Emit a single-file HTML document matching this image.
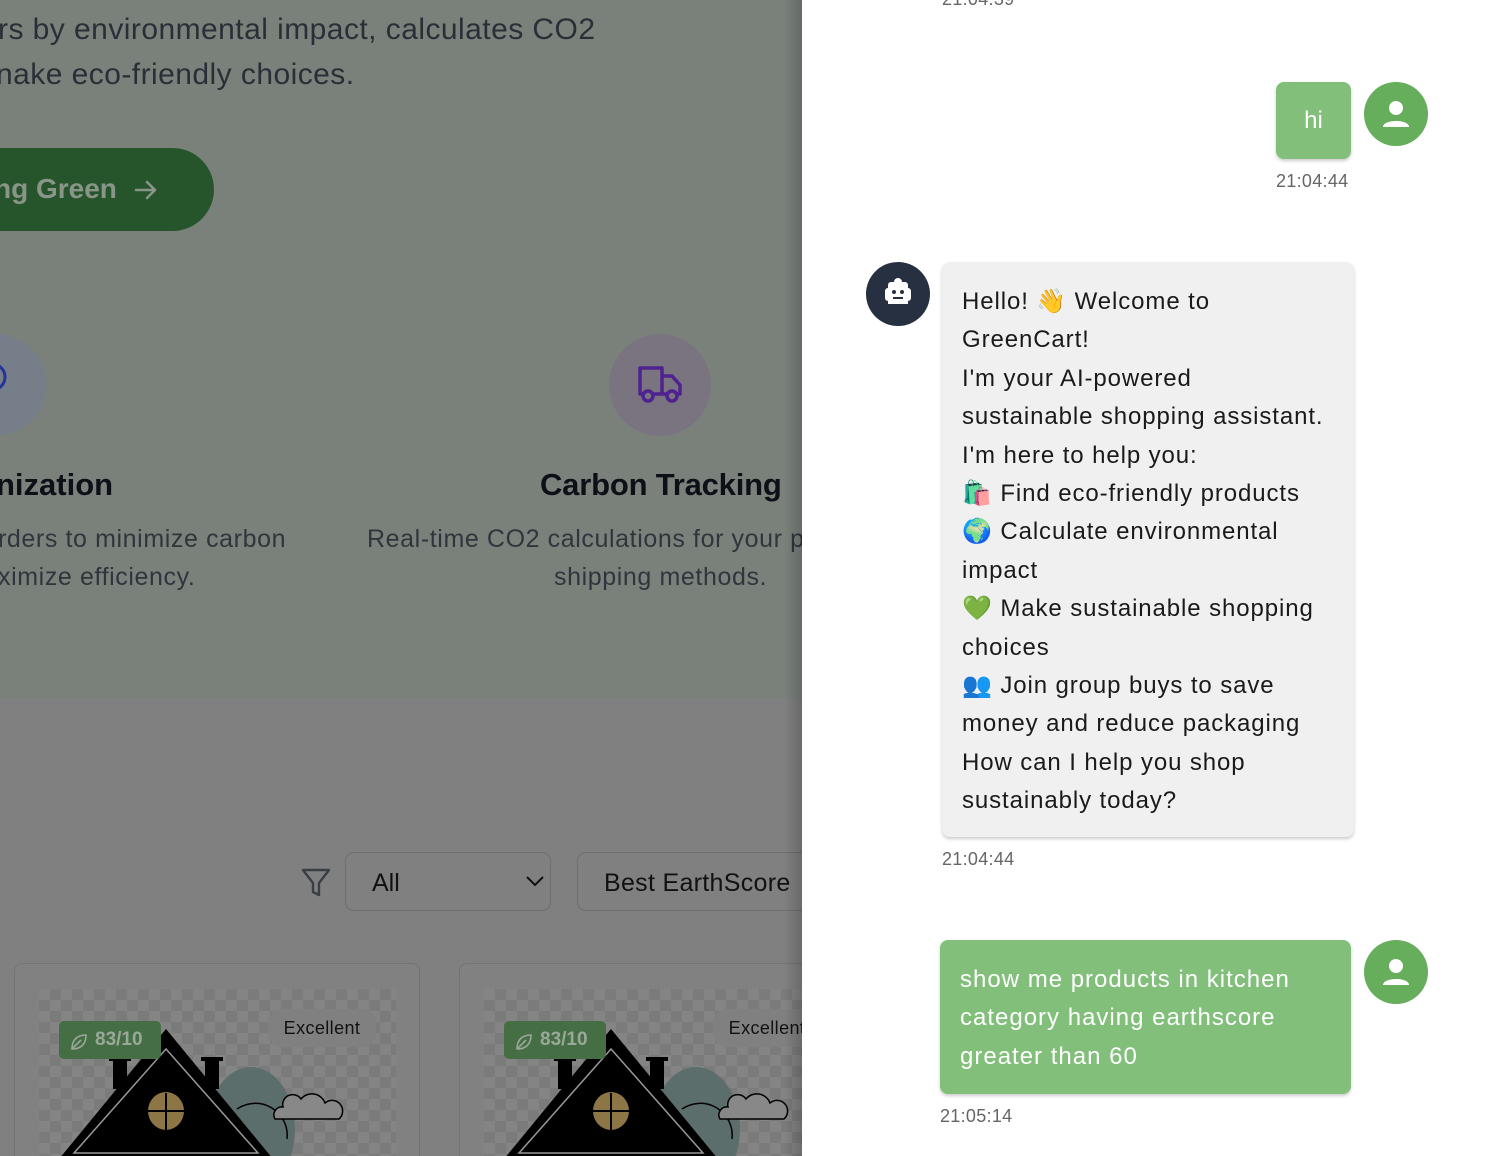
<!DOCTYPE html>
<html><head><meta charset="utf-8">
<style>
*{box-sizing:border-box;margin:0;padding:0}
body{width:1486px;height:1156px;overflow:hidden;position:relative;font-family:"Liberation Sans","Noto Sans CJK SC",sans-serif;background:#fff}
.left{position:absolute;left:0;top:0;width:802px;height:1156px;background:#808080;overflow:hidden}
.hero{position:absolute;left:0;top:0;width:802px;height:698px;background:#7a817b}
.t{position:absolute;white-space:nowrap}
.shade{position:absolute;right:0;top:0;width:18px;height:1156px;background:linear-gradient(to right,rgba(0,0,0,0),rgba(0,0,0,.18))}
.card{position:absolute;top:963px;width:406px;height:220px;border:1px solid #737373;border-radius:8px;background:#818181}
.img{position:absolute;left:24px;top:25px;width:357px;height:200px;background-color:#848484;background-image:linear-gradient(45deg,#7b7b7b 25%,transparent 25%,transparent 75%,#7b7b7b 75%),linear-gradient(45deg,#7b7b7b 25%,transparent 25%,transparent 75%,#7b7b7b 75%);background-size:22px 22px;background-position:0 0,11px 11px}
.badge{position:absolute;left:20px;top:32px;width:102px;height:38px;background:#466e44;border-radius:5px;color:#9aa89a;font-size:19px;font-weight:bold;line-height:38px;padding-left:36px}
.exc{position:absolute;left:229px;top:20px;width:108px;height:38px;background:#808080;border-radius:14px;color:#111;font-size:18px;line-height:38px;text-align:center;letter-spacing:.4px}
.panel{position:absolute;left:802px;top:0;width:684px;height:1156px;background:#fff}
.av{position:absolute;width:64px;height:64px;border-radius:50%}
.ts{position:absolute;font-size:18px;color:#666;white-space:nowrap;letter-spacing:.3px}
.bub{position:absolute;border-radius:8px;font-size:24px;line-height:38.4px;box-shadow:0 2px 3px rgba(0,0,0,.2);white-space:nowrap}
</style></head><body>
<div class="left">
 <div class="hero"></div>
 <div class="t" style="left:-2px;top:13px;font-size:30px;color:#2a2f37;letter-spacing:.45px">rs by environmental impact, calculates CO2</div>
 <div class="t" style="left:-4px;top:58px;font-size:30px;color:#2a2f37;letter-spacing:.45px">nake eco-friendly choices.</div>
 <div style="position:absolute;left:-60px;top:148px;width:274px;height:83px;border-radius:42px;background:#27552b"></div>
 <div class="t" style="left:-6px;top:173px;font-size:28px;font-weight:bold;color:#8a958a">ng Green</div>
 <svg style="position:absolute;left:133px;top:178px" width="26" height="24" viewBox="0 0 26 24"><path d="M3 12h19M14 4l8 8-8 8" stroke="#8a958a" stroke-width="2.5" fill="none" stroke-linecap="round" stroke-linejoin="round"/></svg>
 <div style="position:absolute;left:-56px;top:334px;width:102px;height:102px;border-radius:50%;background:#767e8a"></div>
 <svg style="position:absolute;left:-10px;top:360px" width="20" height="50" viewBox="0 0 20 50"><path d="M2 4 A10 10 0 1 1 2 30 M6 28 L8 42 L2 38" stroke="#24349a" stroke-width="3" fill="none"/></svg>
 <div style="position:absolute;left:609px;top:334px;width:102px;height:102px;border-radius:50%;background:#79747f"></div>
 <svg style="position:absolute;left:636px;top:364px" width="50" height="42" viewBox="0 0 50 42"><path d="M4 4h22v26H4zM26 12h10l8 9v9H26" stroke="#4f2191" stroke-width="3.5" fill="none" stroke-linejoin="round"/><circle cx="12" cy="32" r="5" fill="#79747f" stroke="#4f2191" stroke-width="3.5"/><circle cx="36" cy="32" r="5" fill="#79747f" stroke="#4f2191" stroke-width="3.5"/></svg>
 <div class="t" style="left:-4px;top:467px;font-size:31px;font-weight:bold;color:#0d1017">nization</div>
 <div class="t" style="left:540px;top:467px;font-size:31px;font-weight:bold;color:#0d1017;letter-spacing:-.2px">Carbon Tracking</div>
 <div class="t" style="left:-2px;top:525px;font-size:25px;color:#30353d;letter-spacing:.6px">rders to minimize carbon</div>
 <div class="t" style="left:-2px;top:563px;font-size:25px;color:#30353d;letter-spacing:.6px">ximize efficiency.</div>
 <div class="t" style="left:367px;top:525px;font-size:25px;color:#30353d;letter-spacing:.6px">Real-time CO2 calculations for your pu</div>
 <div class="t" style="left:554px;top:563px;font-size:25px;color:#30353d;letter-spacing:.6px">shipping methods.</div>
 <svg style="position:absolute;left:300px;top:867px" width="32" height="32" viewBox="0 0 32 32"><path d="M3 3h26L19 16v12l-6-3V16z" stroke="#3a3f47" stroke-width="2.4" fill="none" stroke-linejoin="round"/></svg>
 <div style="position:absolute;left:345px;top:852px;width:206px;height:59px;border:1px solid #6e6e6e;border-radius:9px"></div>
 <div class="t" style="left:372px;top:869px;font-size:25px;color:#111">All</div>
 <svg style="position:absolute;left:524px;top:874px" width="22" height="14" viewBox="0 0 22 14"><path d="M3 3l8 8 8-8" stroke="#111" stroke-width="2" fill="none"/></svg>
 <div style="position:absolute;left:577px;top:852px;width:260px;height:59px;border:1px solid #6e6e6e;border-radius:9px"></div>
 <div class="t" style="left:604px;top:869px;font-size:25px;color:#111;letter-spacing:.3px">Best EarthScore</div>
 <div class="card" style="left:14px"><div class="img">
  <svg style="position:absolute;left:0;top:0" width="357" height="200" viewBox="0 0 357 200"><ellipse cx="212" cy="140" rx="44" ry="62" fill="#5b6e6c"/><path d="M198 120a32 32 0 0 1 50 30" stroke="#000" stroke-width="1.5" fill="none"/><path d="M236 130h64a10 10 0 0 0-14-16a14 14 0 0 0-24-4a10 10 0 0 0-18 8a8 8 0 0 0-8 12z" fill="#888" stroke="#000" stroke-width="1.5"/><rect x="74" y="70" width="14" height="30" fill="#000"/><rect x="70" y="68" width="22" height="4" fill="#000"/><rect x="166" y="70" width="14" height="30" fill="#000"/><rect x="162" y="68" width="22" height="4" fill="#000"/><path d="M127 40L20 170h214z" fill="#000"/><path d="M127 60L35 164h184z" fill="none" stroke="#999" stroke-width="1.5"/><rect x="40" y="172" width="176" height="30" fill="#000"/><ellipse cx="127" cy="122" rx="18" ry="19" fill="#8d7646"/><path d="M127 104v37M109 122h36" stroke="#000" stroke-width="2"/></svg>
  <div class="badge">83/10</div>
  <svg style="position:absolute;left:30px;top:43px" width="20" height="20" viewBox="0 0 20 20"><path d="M3 17C3 8 8 3 17 3c0 9-5 14-14 14zM3 17l9-9" stroke="#9aa89a" stroke-width="1.6" fill="none"/></svg>
  <div class="exc">Excellent</div></div></div>
 <div class="card" style="left:459px"><div class="img">
  <svg style="position:absolute;left:0;top:0" width="357" height="200" viewBox="0 0 357 200"><ellipse cx="212" cy="140" rx="44" ry="62" fill="#5b6e6c"/><path d="M198 120a32 32 0 0 1 50 30" stroke="#000" stroke-width="1.5" fill="none"/><path d="M236 130h64a10 10 0 0 0-14-16a14 14 0 0 0-24-4a10 10 0 0 0-18 8a8 8 0 0 0-8 12z" fill="#888" stroke="#000" stroke-width="1.5"/><rect x="74" y="70" width="14" height="30" fill="#000"/><rect x="70" y="68" width="22" height="4" fill="#000"/><rect x="166" y="70" width="14" height="30" fill="#000"/><rect x="162" y="68" width="22" height="4" fill="#000"/><path d="M127 40L20 170h214z" fill="#000"/><path d="M127 60L35 164h184z" fill="none" stroke="#999" stroke-width="1.5"/><rect x="40" y="172" width="176" height="30" fill="#000"/><ellipse cx="127" cy="122" rx="18" ry="19" fill="#8d7646"/><path d="M127 104v37M109 122h36" stroke="#000" stroke-width="2"/></svg>
  <div class="badge">83/10</div>
  <svg style="position:absolute;left:30px;top:43px" width="20" height="20" viewBox="0 0 20 20"><path d="M3 17C3 8 8 3 17 3c0 9-5 14-14 14zM3 17l9-9" stroke="#9aa89a" stroke-width="1.6" fill="none"/></svg>
  <div class="exc">Excellent</div></div></div>
 <div class="shade"></div>
</div>
<div class="panel">
 <div class="ts" style="left:140px;top:-11px">21:04:39</div>
 <div class="bub" style="left:474px;top:82px;width:75px;height:77px;background:#81bf7a;color:#fff;text-align:center;line-height:77px">hi</div>
 <div class="av" style="left:562px;top:82px;background:#66ad5c"></div>
 <svg style="position:absolute;left:579px;top:98px" width="30" height="32" viewBox="0 0 30 32"><circle cx="15" cy="10" r="7" fill="#fff"/><path d="M2 29c0-8 26-8 26 0z" fill="#fff"/></svg>
 <div class="ts" style="left:474px;top:171px">21:04:44</div>
 <div class="av" style="left:64px;top:262px;background:#263040"></div>
 <svg style="position:absolute;left:78px;top:276px" width="36" height="36" viewBox="0 0 36 36"><path d="M14 6a4 4 0 0 1 8 0h3a3 3 0 0 1 3 3v3a3 3 0 0 1 3 3v7a3 3 0 0 1-3 3v3H8v-3a3 3 0 0 1-3-3v-7a3 3 0 0 1 3-3V9a3 3 0 0 1 3-3z" fill="#fff"/><circle cx="14" cy="16" r="2" fill="#263040"/><circle cx="22" cy="16" r="2" fill="#263040"/><rect x="13" y="21" width="10" height="2" fill="#263040"/></svg>
 <div class="bub" style="left:140px;top:262px;width:412px;height:575px;background:#f0f0f0;color:#1a1a1a;padding:21px 20px;letter-spacing:.9px">Hello! 👋 Welcome to<br>GreenCart!<br>I'm your AI-powered<br>sustainable shopping assistant.<br>I'm here to help you:<br>🛍️ Find eco-friendly products<br>🌍 Calculate environmental<br>impact<br>💚 Make sustainable shopping<br>choices<br>👥 Join group buys to save<br>money and reduce packaging<br>How can I help you shop<br>sustainably today?</div>
 <div class="ts" style="left:140px;top:849px">21:04:44</div>
 <div class="bub" style="left:138px;top:940px;width:411px;height:154px;background:#81bf7a;color:#fff;padding:21px 20px;letter-spacing:1px">show me products in kitchen<br>category having earthscore<br>greater than 60</div>
 <div class="av" style="left:562px;top:940px;background:#66ad5c"></div>
 <svg style="position:absolute;left:579px;top:956px" width="30" height="32" viewBox="0 0 30 32"><circle cx="15" cy="10" r="7" fill="#fff"/><path d="M2 29c0-8 26-8 26 0z" fill="#fff"/></svg>
 <div class="ts" style="left:138px;top:1106px">21:05:14</div>
</div>
</body></html>
